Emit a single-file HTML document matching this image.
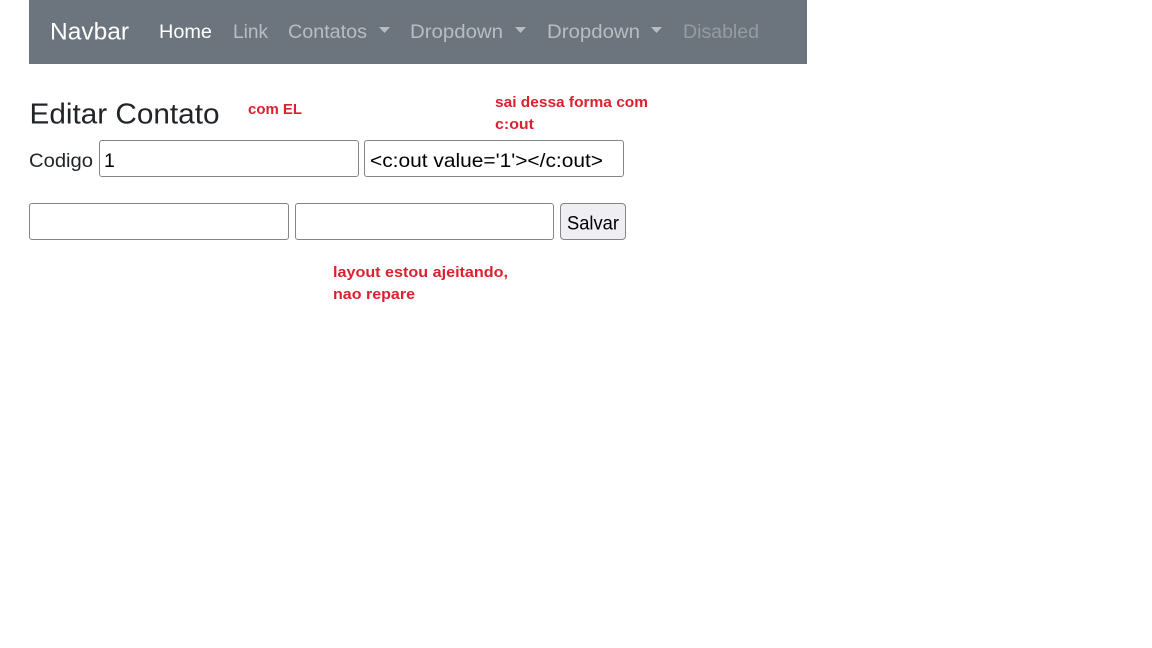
<!DOCTYPE html>
<html lang="pt">
<head>
<meta charset="utf-8">
<title>Editar Contato</title>
<style>
html,body{margin:0;padding:0;background:#fff;width:1152px;height:648px;overflow:hidden}
svg{position:absolute;left:0;top:0;display:block}
text{font-family:"Liberation Sans",sans-serif}
.r{font-weight:700;font-size:14.5px;fill:#dc2030}
.n{font-size:19.5px;fill:#b9bdc1}
.i{font-size:19.5px;fill:#000}
</style>
</head>
<body>
<svg width="1152" height="648" viewBox="0 0 1152 648" xmlns="http://www.w3.org/2000/svg">
<rect x="29" y="0" width="778" height="64" fill="#6c757d"/>
<text x="50" y="39.5" font-size="24" fill="#fff" textLength="79" lengthAdjust="spacingAndGlyphs">Navbar</text>
<text x="159" y="38" class="n" style="fill:#fff" textLength="53" lengthAdjust="spacingAndGlyphs">Home</text>
<text x="233" y="38" class="n" textLength="35" lengthAdjust="spacingAndGlyphs">Link</text>
<text x="288" y="38" class="n" textLength="79" lengthAdjust="spacingAndGlyphs">Contatos</text>
<path d="M379 27h11l-5.500 6z" fill="#b9bdc1"/>
<text x="410" y="38" class="n" textLength="93" lengthAdjust="spacingAndGlyphs">Dropdown</text>
<path d="M515 27h11l-5.500 6z" fill="#b9bdc1"/>
<text x="547" y="38" class="n" textLength="93" lengthAdjust="spacingAndGlyphs">Dropdown</text>
<path d="M651 27h11l-5.500 6z" fill="#b9bdc1"/>
<text x="683" y="38" class="n" style="fill:#969ca1" textLength="76" lengthAdjust="spacingAndGlyphs">Disabled</text>

<text x="29.500" y="123.500" font-size="29" fill="#212529" textLength="190" lengthAdjust="spacingAndGlyphs">Editar Contato</text>
<text x="248" y="114" class="r" textLength="54" lengthAdjust="spacingAndGlyphs">com EL</text>
<text x="495" y="107" class="r" textLength="153" lengthAdjust="spacingAndGlyphs">sai dessa forma com</text>
<text x="495" y="129" class="r" textLength="39" lengthAdjust="spacingAndGlyphs">c:out</text>

<text x="29" y="167" font-size="19.500" fill="#212529" textLength="64" lengthAdjust="spacingAndGlyphs">Codigo</text>
<rect x="99.500" y="140.500" width="259" height="36" rx="2.500" fill="#fff" stroke="#858585"/>
<text x="104" y="167" class="i">1</text>
<rect x="364.500" y="140.500" width="259" height="36" rx="2.500" fill="#fff" stroke="#858585"/>
<text x="370" y="167" class="i" textLength="233" lengthAdjust="spacingAndGlyphs">&lt;c:out value='1'&gt;&lt;/c:out&gt;</text>

<rect x="29.500" y="203.500" width="259" height="36" rx="2.500" fill="#fff" stroke="#858585"/>
<rect x="295.500" y="203.500" width="258" height="36" rx="2.500" fill="#fff" stroke="#858585"/>
<rect x="560.500" y="203.500" width="65" height="36" rx="3.500" fill="#efeff3" stroke="#858585"/>
<text x="567" y="229.500" class="i" textLength="52" lengthAdjust="spacingAndGlyphs">Salvar</text>

<text x="333" y="277" class="r" textLength="175" lengthAdjust="spacingAndGlyphs">layout estou ajeitando,</text>
<text x="333" y="299" class="r" textLength="82" lengthAdjust="spacingAndGlyphs">nao repare</text>
</svg>
</body>
</html>
